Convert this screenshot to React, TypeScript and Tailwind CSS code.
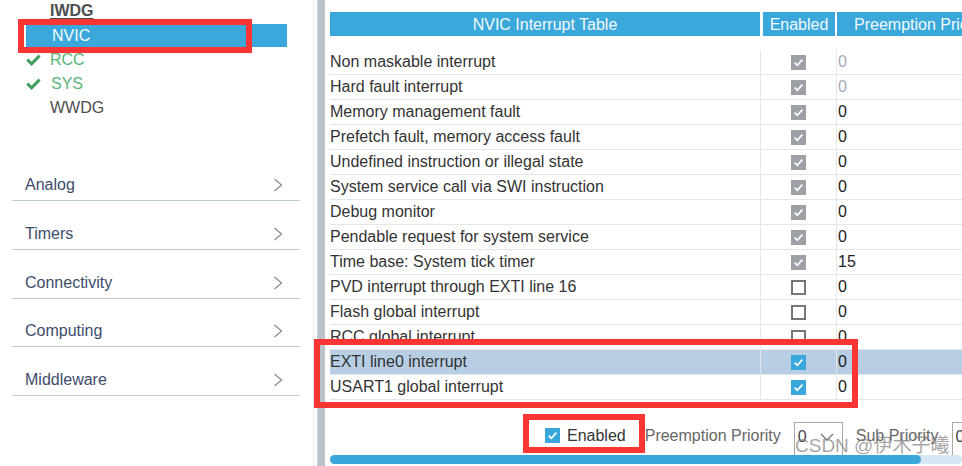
import React from "react";

type Row = { name: string; cb: "gray" | "off" | "blue"; val: string; dim?: boolean; hl?: boolean };

const rows: Row[] = [
  { name: "Non maskable interrupt", cb: "gray", val: "0", dim: true },
  { name: "Hard fault interrupt", cb: "gray", val: "0", dim: true },
  { name: "Memory management fault", cb: "gray", val: "0" },
  { name: "Prefetch fault, memory access fault", cb: "gray", val: "0" },
  { name: "Undefined instruction or illegal state", cb: "gray", val: "0" },
  { name: "System service call via SWI instruction", cb: "gray", val: "0" },
  { name: "Debug monitor", cb: "gray", val: "0" },
  { name: "Pendable request for system service", cb: "gray", val: "0" },
  { name: "Time base: System tick timer", cb: "gray", val: "15" },
  { name: "PVD interrupt through EXTI line 16", cb: "off", val: "0" },
  { name: "Flash global interrupt", cb: "off", val: "0" },
  { name: "RCC global interrupt", cb: "off", val: "0" },
  { name: "EXTI line0 interrupt", cb: "blue", val: "0", hl: true },
  { name: "USART1 global interrupt", cb: "blue", val: "0" },
];

function Check() {
  return (
    <svg width="15" height="15" viewBox="0 0 15 15" className="block">
      <path d="M3.6 7.6 L6.3 10.2 L11.4 4.6" fill="none" stroke="white" strokeWidth="1.7" />
    </svg>
  );
}

function Box({ kind }: { kind: "gray" | "off" | "blue" }) {
  if (kind === "off")
    return <span className="block w-[15px] h-[15px] border-[2px] border-[#767676] bg-white" />;
  return (
    <span className={"block w-[15px] h-[15px] " + (kind === "gray" ? "bg-[#9da1a5]" : "bg-[#3aa7dc]")}>
      <Check />
    </span>
  );
}

function GreenCheck() {
  return (
    <svg width="15" height="12" viewBox="0 0 15 12" className="block">
      <path d="M1.3 5.6 L5.6 9.8 L13.6 1.6" fill="none" stroke="#3f9f5e" strokeWidth="3" />
    </svg>
  );
}

function Chevron() {
  return (
    <svg width="10" height="14" viewBox="0 0 10 14" className="block">
      <polyline points="1.5,1 8.5,7 1.5,13" fill="none" stroke="#8c8c8c" strokeWidth="1.3" />
    </svg>
  );
}

const categories = [
  { name: "Analog", h: "h-[49px]" },
  { name: "Timers", h: "h-[49px]" },
  { name: "Connectivity", h: "h-[49px]" },
  { name: "Computing", h: "h-[48px]" },
  { name: "Middleware", h: "h-[49px]" },
];

export default function App() {
  return (
    <div className="relative flex h-[466px] w-[962px] overflow-hidden bg-white font-['Liberation_Sans',Arial,sans-serif] text-[16px]">
      {/* Left panel */}
      <div className="w-[314px] shrink-0 h-full border-r border-[#e4e4e4]">
        <div className="mt-[-1px]">
          <div className="h-[24px] flex items-center pl-[50px] text-[#4d4d4d] font-bold underline underline-offset-2 leading-[18px]">
            IWDG
          </div>
          <div className="h-[24px]">
            <div className="mt-[1px] ml-[26px] w-[261px] h-[23px] bg-[#3ba8dc] pl-[26px] flex items-center text-[#f4fbff] leading-[18px]">
              NVIC
            </div>
          </div>
          <div className="h-[24px] flex items-center text-[#58b677] leading-[18px]">
            <span className="ml-[26px] w-[24px]">
              <GreenCheck />
            </span>
            RCC
          </div>
          <div className="h-[24px] flex items-center text-[#58b677] leading-[18px]">
            <span className="ml-[26px] w-[25px]">
              <GreenCheck />
            </span>
            SYS
          </div>
          <div className="h-[24px] flex items-center pl-[50px] text-[#4d4d4d] leading-[18px]">WWDG</div>
        </div>
        <div className="h-[32px]" />
        <div className="mx-[12px] w-[288px]">
          {categories.map((c) => (
            <div key={c.name} className={c.h + " flex flex-col justify-end border-b border-[#bfc9d3]"}>
              <div className="h-[20px] mb-[5px] flex items-center justify-between pl-[13px] pr-[17px] text-[#3e4c6c] leading-[20px]">
                <span>{c.name}</span>
                <Chevron />
              </div>
            </div>
          ))}
        </div>
      </div>

      {/* Splitter */}
      <div className="w-[3px] shrink-0" />
      <div className="w-[8px] shrink-0 h-full bg-[#bac3c9] border-l border-[#cdd4d8]" />
      <div className="w-[5px] shrink-0" />

      {/* Right panel */}
      <div className="w-[632px] shrink-0 overflow-hidden">
        <div className="pt-[12px]">
          <div className="flex h-[24px] text-[#f2f9fd] leading-[25px]">
            <div className="w-[430px] shrink-0 bg-[#3ba8dc] text-center">NVIC Interrupt Table</div>
            <div className="w-[72px] shrink-0 ml-[3px] bg-[#3ba8dc] text-center">Enabled</div>
            <div className="w-[200px] shrink-0 ml-[2px] bg-[#3ba8dc] pl-[17px] whitespace-nowrap">Preemption Priority</div>
          </div>
        </div>
        <div className="mt-[14px]">
          {rows.map((r) => (
            <div
              key={r.name}
              className={"flex h-[25px] border-b border-[#e4e7ea] " + (r.hl ? "bg-[#b8cee4]" : "")}
            >
              <div className="w-[431px] shrink-0 border-r border-[#e4e7ea] flex items-center text-[#333] leading-[18px] whitespace-nowrap">
                {r.name}
              </div>
              <div className="w-[76px] shrink-0 border-r border-[#e4e7ea] flex items-center justify-center">
                <Box kind={r.cb} />
              </div>
              <div className={"flex-1 pl-[1px] flex items-center leading-[18px] " + (r.dim ? "text-[#a3abb5]" : "text-[#222]")}>
                {r.val}
              </div>
            </div>
          ))}
        </div>

        {/* Bottom controls */}
        <div className="mt-[21px] h-[34px] flex items-start pl-[215px] whitespace-nowrap leading-[18px]">
          <span className="mt-[7px]">
            <Box kind="blue" />
          </span>
          <span className="mt-[6px] ml-[7px] text-[#333]">Enabled</span>
          <span className="mt-[6px] ml-[19px] text-[#666]">Preemption Priority</span>
          <div className="mt-[1px] ml-[13px] w-[49px] h-[33px] shrink-0 border border-b-0 border-[#a9a9a9] flex items-start justify-between pl-[3px] pr-[8px] pt-[5px] text-[#444]">
            <span>0</span>
            <svg width="14" height="9" viewBox="0 0 14 9" className="mt-[5px]">
              <polyline points="1,1 7,7 13,1" fill="none" stroke="#777" strokeWidth="1.3" />
            </svg>
          </div>
          <span className="mt-[6px] ml-[13px] text-[#666]">Sub Priority</span>
          <div className="mt-[1px] ml-[14px] w-[49px] h-[33px] shrink-0 border border-b-0 border-[#a9a9a9] pl-[2px] pt-[5px] text-[#444]">
            0
          </div>
        </div>
        <div className="h-[9px] w-[632px] bg-[#d6e7f4] rounded-full">
          <div className="h-[9px] w-[591px] bg-[#3aa7db] rounded-full" />
        </div>
      </div>

      {/* Watermark */}
      <div className="absolute left-[795px] top-[434px] text-[19px] leading-[24px] text-[#7d7d7d]/70 font-['Liberation_Sans','Noto_Sans_CJK_SC',sans-serif] whitespace-nowrap">
        CSDN @伊木子曦
      </div>

      {/* Red annotation boxes */}
      <div className="absolute left-[18px] top-[19px] w-[234px] h-[34px] border-[6px] border-[#fb3434]" />
      <div className="absolute left-[314px] top-[339px] w-[544px] h-[69px] border-[6px] border-[#fb3434]" />
      <div className="absolute left-[523px] top-[414px] w-[122px] h-[39px] border-[6px] border-[#fb3434]" />
    </div>
  );
}
